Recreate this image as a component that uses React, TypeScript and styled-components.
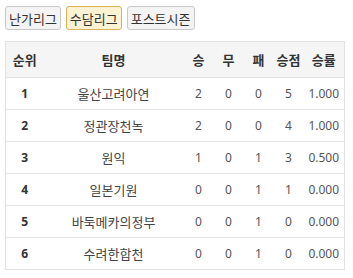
import { useState } from 'react'
import styled, { createGlobalStyle } from 'styled-components'

const GlobalStyle = createGlobalStyle`
  body {
    margin: 0;
    background: #fff;
    font-family: "Noto Sans", "Noto Sans CJK KR", sans-serif;
  }
`

const leagues = ['난가리그', '수담리그', '포스트시즌']

const standings = [
  { rank: 1, team: '울산고려아연', win: 2, draw: 0, loss: 0, points: 5, rate: '1.000' },
  { rank: 2, team: '정관장천녹', win: 2, draw: 0, loss: 0, points: 4, rate: '1.000' },
  { rank: 3, team: '원익', win: 1, draw: 0, loss: 1, points: 3, rate: '0.500' },
  { rank: 4, team: '일본기원', win: 0, draw: 0, loss: 1, points: 1, rate: '0.000' },
  { rank: 5, team: '바둑메카의정부', win: 0, draw: 0, loss: 1, points: 0, rate: '0.000' },
  { rank: 6, team: '수려한합천', win: 0, draw: 0, loss: 1, points: 0, rate: '0.000' },
]

const columns = [
  { label: '순위', width: 38 },
  { label: '팀명', width: 140 },
  { label: '승', width: 30 },
  { label: '무', width: 30 },
  { label: '패', width: 30 },
  { label: '승점', width: 30 },
  { label: '승률', width: 41 },
]

export default function App() {
  const [active, setActive] = useState(1)

  return (
    <>
      <GlobalStyle />
      <Page>
        <Tabs>
          {leagues.map((name, i) => (
            <TabButton key={name} active={i === active} onClick={() => setActive(i)}>
              {name}
            </TabButton>
          ))}
        </Tabs>
        <Table>
          <colgroup>
            {columns.map((c) => (
              <col key={c.label} style={{ width: c.width }} />
            ))}
          </colgroup>
          <thead>
            <tr>
              {columns.map((c) => (
                <Th key={c.label}>{c.label}</Th>
              ))}
            </tr>
          </thead>
          <tbody>
            {standings.map((row) => (
              <tr key={row.rank}>
                <RankCell>{row.rank}</RankCell>
                <TeamCell>{row.team}</TeamCell>
                <Td>{row.win}</Td>
                <Td>{row.draw}</Td>
                <Td>{row.loss}</Td>
                <Td>{row.points}</Td>
                <Td>{row.rate}</Td>
              </tr>
            ))}
          </tbody>
        </Table>
      </Page>
    </>
  )
}

const Page = styled.div`
  padding: 6px 9px 0 5px;
`

const Tabs = styled.div`
  display: flex;
  gap: 5px;
  margin-bottom: 11px;
`

const TabButton = styled.button<{ active?: boolean }>`
  height: 24px;
  padding: 0 3px;
  font-family: "Noto Sans", "Noto Sans CJK KR", sans-serif;
  font-size: 13px;
  color: #333;
  background: ${({ active }) => (active ? '#fcf2d4' : '#f4f4f4')};
  border: 1px solid ${({ active }) => (active ? '#dbb15a' : '#c8c8c8')};
  border-radius: 3px;
  cursor: pointer;
`

const Table = styled.table`
  width: 339px;
  table-layout: fixed;
  border-collapse: collapse;
  border: 1px solid #e2e2e2;
`

const Th = styled.th`
  height: 35px;
  padding: 0;
  background: #f5f5f5;
  border-bottom: 1px solid #e2e2e2;
  font-size: 13px;
  font-weight: 600;
  color: #333;
  text-align: center;
`

const Td = styled.td`
  height: 31px;
  padding: 0;
  border-top: 1px solid #e6e6e6;
  font-size: 12px;
  color: #555;
  text-align: center;
`

const TeamCell = styled(Td)`
  font-size: 13px;
  color: #444;
`

const RankCell = styled(Td)`
  font-weight: 700;
  color: #333;
`
